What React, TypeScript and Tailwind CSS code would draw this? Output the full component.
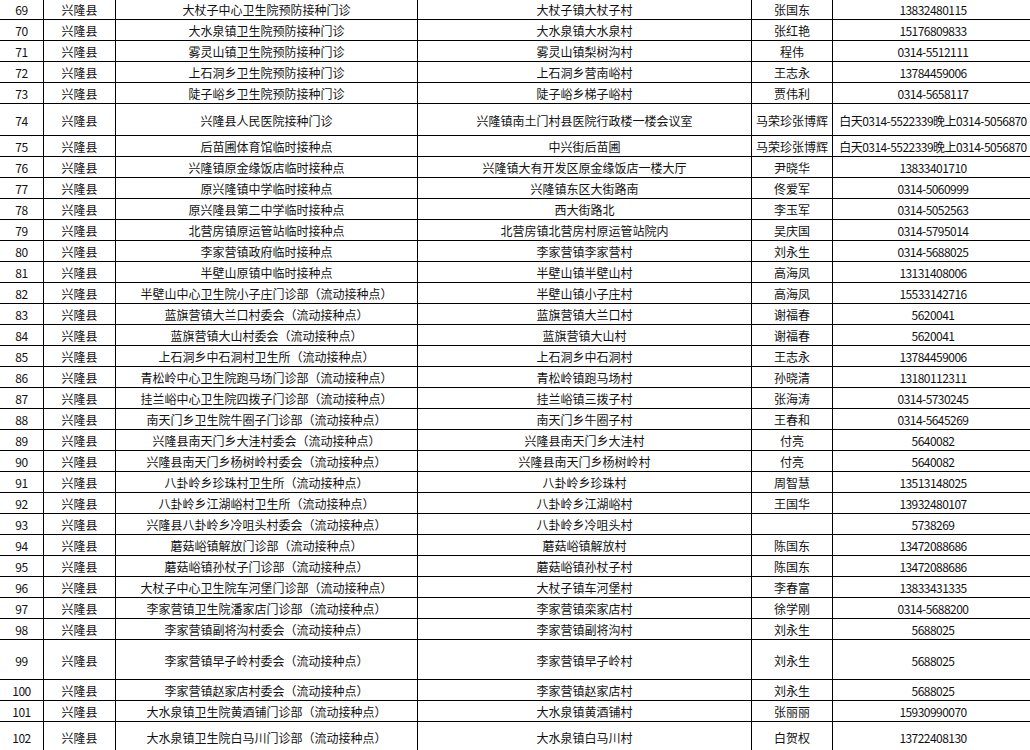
import React from "react";

type Row = [number, string, string, string, string, number?];

const rows: Row[] = [
  [69, "大杖子中心卫生院预防接种门诊", "大杖子镇大杖子村", "张国东", "13832480115"],
  [70, "大水泉镇卫生院预防接种门诊", "大水泉镇大水泉村", "张红艳", "15176809833"],
  [71, "雾灵山镇卫生院预防接种门诊", "雾灵山镇梨树沟村", "程伟", "0314-5512111"],
  [72, "上石洞乡卫生院预防接种门诊", "上石洞乡营南峪村", "王志永", "13784459006"],
  [73, "陡子峪乡卫生院预防接种门诊", "陡子峪乡梯子峪村", "贾伟利", "0314-5658117"],
  [74, "兴隆县人民医院接种门诊", "兴隆镇南土门村县医院行政楼一楼会议室", "马荣珍张博辉", "白天0314-5522339晚上0314-5056870", 32],
  [75, "后苗圃体育馆临时接种点", "中兴街后苗圃", "马荣珍张博辉", "白天0314-5522339晚上0314-5056870"],
  [76, "兴隆镇原金缘饭店临时接种点", "兴隆镇大有开发区原金缘饭店一楼大厅", "尹晓华", "13833401710"],
  [77, "原兴隆镇中学临时接种点", "兴隆镇东区大街路南", "佟爱军", "0314-5060999"],
  [78, "原兴隆县第二中学临时接种点", "西大街路北", "李玉军", "0314-5052563"],
  [79, "北营房镇原运管站临时接种点", "北营房镇北营房村原运管站院内", "吴庆国", "0314-5795014"],
  [80, "李家营镇政府临时接种点", "李家营镇李家营村", "刘永生", "0314-5688025"],
  [81, "半壁山原镇中临时接种点", "半壁山镇半壁山村", "高海凤", "13131408006"],
  [82, "半壁山中心卫生院小子庄门诊部（流动接种点）", "半壁山镇小子庄村", "高海凤", "15533142716"],
  [83, "蓝旗营镇大兰口村委会（流动接种点）", "蓝旗营镇大兰口村", "谢福春", "5620041"],
  [84, "蓝旗营镇大山村委会（流动接种点）", "蓝旗营镇大山村", "谢福春", "5620041"],
  [85, "上石洞乡中石洞村卫生所（流动接种点）", "上石洞乡中石洞村", "王志永", "13784459006"],
  [86, "青松岭中心卫生院跑马场门诊部（流动接种点）", "青松岭镇跑马场村", "孙晓清", "13180112311"],
  [87, "挂兰峪中心卫生院四拨子门诊部（流动接种点）", "挂兰峪镇三拨子村", "张海涛", "0314-5730245"],
  [88, "南天门乡卫生院牛圈子门诊部（流动接种点）", "南天门乡牛圈子村", "王春和", "0314-5645269"],
  [89, "兴隆县南天门乡大洼村委会（流动接种点）", "兴隆县南天门乡大洼村", "付亮", "5640082"],
  [90, "兴隆县南天门乡杨树岭村委会（流动接种点）", "兴隆县南天门乡杨树岭村", "付亮", "5640082"],
  [91, "八卦岭乡珍珠村卫生所（流动接种点）", "八卦岭乡珍珠村", "周智慧", "13513148025"],
  [92, "八卦岭乡江湖峪村卫生所（流动接种点）", "八卦岭乡江湖峪村", "王国华", "13932480107"],
  [93, "兴隆县八卦岭乡冷咀头村委会（流动接种点）", "八卦岭乡冷咀头村", "", "5738269"],
  [94, "蘑菇峪镇解放门诊部（流动接种点）", "蘑菇峪镇解放村", "陈国东", "13472088686"],
  [95, "蘑菇峪镇孙杖子门诊部（流动接种点）", "蘑菇峪镇孙杖子村", "陈国东", "13472088686"],
  [96, "大杖子中心卫生院车河堡门诊部（流动接种点）", "大杖子镇车河堡村", "李春富", "13833431335"],
  [97, "李家营镇卫生院潘家店门诊部（流动接种点）", "李家营镇栾家店村", "徐学刚", "0314-5688200"],
  [98, "李家营镇副将沟村委会（流动接种点）", "李家营镇副将沟村", "刘永生", "5688025"],
  [99, "李家营镇早子岭村委会（流动接种点）", "李家营镇早子岭村", "刘永生", "5688025", 40],
  [100, "李家营镇赵家店村委会（流动接种点）", "李家营镇赵家店村", "刘永生", "5688025"],
  [101, "大水泉镇卫生院黄酒铺门诊部（流动接种点）", "大水泉镇黄酒铺村", "张丽丽", "15930990070"],
  [102, "大水泉镇卫生院白马川门诊部（流动接种点）", "大水泉镇白马川村", "白贺权", "13722408130", 31],
];

const cjk = { fontFamily: '"Noto Sans CJK SC", "Noto Sans", sans-serif' };

export default function App() {
  return (
    <div className="w-[1030px] h-[750px] overflow-hidden bg-white text-[#111]" style={cjk}>
      <div className="-mt-px flex flex-col">
        {rows.map(([n, a, b, c, d, h]) => (
          <div
            key={n}
            className="flex border-b border-black"
            style={{ height: h ?? 21 }}
          >
            <div className="w-[44px] shrink-0 border-r border-black flex items-center justify-center pt-[2px] text-[12px] tracking-[-0.5px] leading-none">
              {n}
            </div>
            <div className="w-[72px] shrink-0 border-r border-black flex items-center justify-center pt-[2px] text-[12px] leading-none whitespace-nowrap">
              兴隆县
            </div>
            <div className="w-[302px] shrink-0 border-r border-black flex items-center justify-center pt-[2px] text-[12px] leading-none whitespace-nowrap">
              {a}
            </div>
            <div className="w-[334px] shrink-0 border-r border-black flex items-center justify-center pt-[2px] text-[12px] leading-none whitespace-nowrap">
              {b}
            </div>
            <div className="w-[81px] shrink-0 border-r border-black flex items-center justify-center pt-[2px] text-[12px] leading-none whitespace-nowrap">
              {c}
            </div>
            <div className="w-[198px] shrink-0 flex items-center pt-[2px] text-[12px] leading-none">
              <div className="w-full text-center whitespace-nowrap tracking-[-0.55px] pl-[2px]">{d}</div>
            </div>
          </div>
        ))}
      </div>
    </div>
  );
}
